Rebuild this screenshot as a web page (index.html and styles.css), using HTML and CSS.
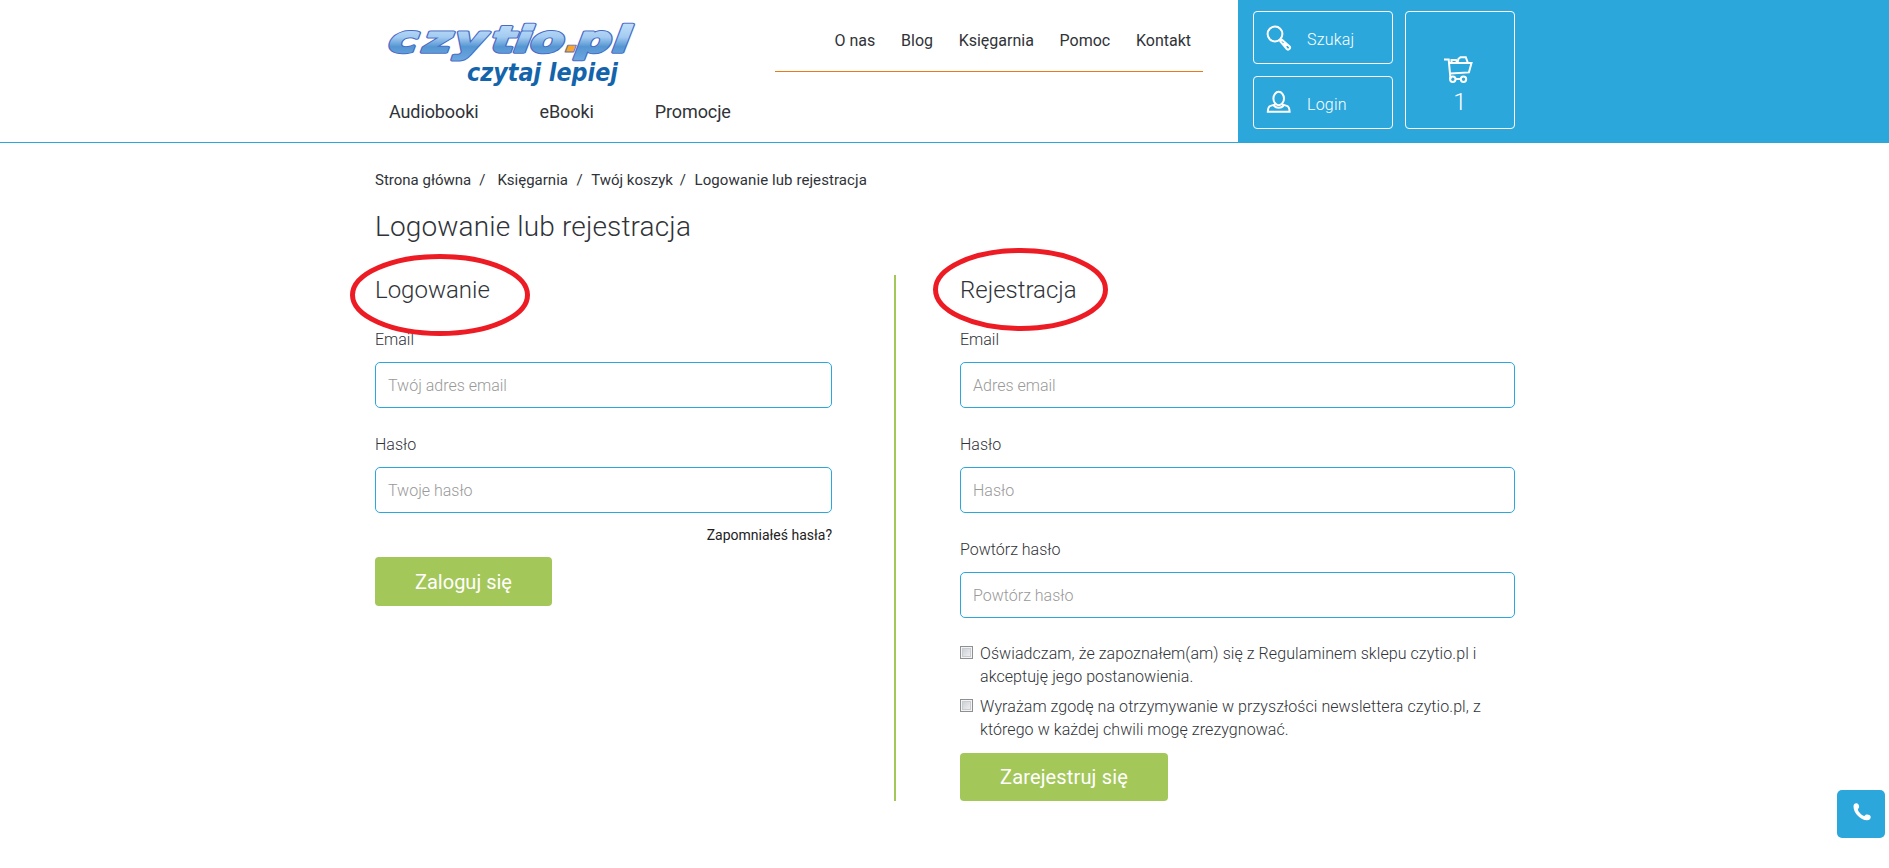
FILE: index.html
```html
<!DOCTYPE html>
<html lang="pl">
<head>
  <meta charset="UTF-8">
  <meta name="viewport" content="width=device-width, initial-scale=1.0">
  <title>Logowanie lub rejestracja - czytio.pl</title>
  <link rel="stylesheet" href="styles.css">
</head>
<body>
  <header class="header">
    <div class="header-main">
      <div class="brand">
        <a href="#" class="logo">
          <svg width="252" height="86" viewBox="0 0 252 86">
            <defs>
              <linearGradient id="logo-blue" gradientUnits="userSpaceOnUse" x1="0" y1="-30" x2="0" y2="8">
                <stop offset="0" stop-color="#c3e2fb"/>
                <stop offset="0.4" stop-color="#a3cbf1"/>
                <stop offset="0.65" stop-color="#5596d2"/>
                <stop offset="1" stop-color="#6ba6e0"/>
              </linearGradient>
            </defs>
            <g class="logo-name" transform="translate(-1 52) skewX(-7) scale(1.35 1)">
              <text class="logo-edge" x="0 25.500 48.500 76 93 105 139 166">czytiopl</text>
              <text class="logo-fill" x="0 25.500 48.500 76 93 105 139 166">czytiopl</text>
              <text class="logo-dot" x="129.500">.</text>
            </g>
            <text x="78" y="81" class="logo-tag" textLength="151" lengthAdjust="spacingAndGlyphs">czytaj lepiej</text>
          </svg>
        </a>
        <nav class="main-nav">
          <a href="#">Audiobooki</a>
          <a href="#">eBooki</a>
          <a href="#">Promocje</a>
        </nav>
      </div>
      <nav class="top-nav">
        <a href="#">O nas</a>
        <a href="#">Blog</a>
        <a href="#">Księgarnia</a>
        <a href="#">Pomoc</a>
        <a href="#">Kontakt</a>
      </nav>
    </div>
    <div class="header-tools">
      <div class="tools-left">
        <a href="#" class="tool">
          <svg width="26" height="26" viewBox="0 0 26 26">
            <circle cx="9" cy="9" r="7.4"/>
            <path d="M14 14.2l2 2M16 14.8l7.4 6.4a1.9 1.9 0 0 1-2.6 2.8l-6.4-7.4zM17.5 17.8l3.4 3.2"/>
          </svg>
          <span>Szukaj</span>
        </a>
        <a href="#" class="tool">
          <svg width="26" height="26" viewBox="0 0 26 26">
            <ellipse cx="12.7" cy="8.500" rx="5.3" ry="6.7"/>
            <path d="M9.5 14.400l-5 1.5c-2 .7-2.6 2.4-2.7 5.8h21.8c-.1-3.400-.7-5.100-2.700-5.800l-5-1.500M7.800 15.800c2.500 2.700 7.300 2.700 9.800 0"/>
          </svg>
          <span>Login</span>
        </a>
      </div>
      <a href="#" class="cart">
        <svg width="30" height="29" viewBox="0 0 30 29">
          <path d="M1 4.600h4.700l1.800 19.400M6.500 8h22l-2.600 9.400-18.600 1.200M8.500 7.500V5h4.500l1 2M14.500 7.500l1-3.700 2-1.600h5.300l1.900 5.300M13 24h4"/>
          <circle cx="9.800" cy="24.200" r="2.700"/>
          <circle cx="20.500" cy="24.200" r="2.700"/>
        </svg>
        <span>1</span>
      </a>
    </div>
  </header>

  <main class="container">
    <div class="breadcrumb">
      <a href="#">Strona główna</a><span class="sep-wide">/</span>
      <a href="#">Księgarnia</a><span>/</span>
      <a href="#" class="crumb-cart">Twój koszyk</a><span>/</span>
      <a href="#" class="crumb-current">Logowanie lub rejestracja</a>
    </div>

    <h1>Logowanie lub rejestracja</h1>

    <div class="columns">
      <form class="login">
        <h2>Logowanie
          <svg class="mark mark-login" width="180" height="82" viewBox="0 0 180 82"><ellipse cx="90" cy="41" rx="87.500" ry="38.500"/></svg>
        </h2>
        <label for="login-email">Email</label>
        <input type="email" id="login-email" placeholder="Twój adres email">
        <label for="login-haslo">Hasło</label>
        <input type="password" id="login-haslo" placeholder="Twoje hasło">
        <a href="#" class="forgot">Zapomniałeś hasła?</a>
        <button type="submit">Zaloguj się</button>
      </form>

      <form class="register">
        <h2>Rejestracja
          <svg class="mark mark-register" width="175" height="83" viewBox="0 0 175 83"><ellipse cx="87.500" cy="41.500" rx="85" ry="39"/></svg>
        </h2>
        <label for="reg-email">Email</label>
        <input type="email" id="reg-email" placeholder="Adres email">
        <label for="reg-haslo">Hasło</label>
        <input type="password" id="reg-haslo" placeholder="Hasło">
        <label for="reg-haslo2">Powtórz hasło</label>
        <input type="password" id="reg-haslo2" placeholder="Powtórz hasło">
        <div class="agreements">
          <div class="agreement">
            <input type="checkbox" id="regulamin">
            <label for="regulamin">Oświadczam, że zapoznałem(am) się z Regulaminem sklepu czytio.pl i<br>akceptuję jego postanowienia.</label>
          </div>
          <div class="agreement">
            <input type="checkbox" id="newsletter">
            <label for="newsletter">Wyrażam zgodę na otrzymywanie w przyszłości newslettera czytio.pl, z<br>którego w każdej chwili mogę zrezygnować.</label>
          </div>
        </div>
        <button type="submit">Zarejestruj się</button>
      </form>
    </div>
  </main>

  <a href="#" class="phone">
    <svg width="20" height="20" viewBox="0 0 20 20">
      <path d="M1.500 4.500C1.500 2 3 1 4.800 1.300c1.500.3 2.600 2.400 2.300 4-.2 1.200-1.300 1.500-1.200 2.300.3 2.300 3.700 5.800 6.100 6.300.9.200 1.200-1 2.400-1.300 1.700-.4 4 .6 4.300 2.100.3 1.800-1.200 3.500-3.700 3.500C8.500 18.200 1.500 11 1.500 4.500z"/>
    </svg>
  </a>
</body>
</html>
```
FILE: styles.css
```css
* {
  box-sizing: border-box;
  margin: 0;
  padding: 0;
}

body {
  font-family: Roboto, 'Liberation Sans', sans-serif;
  font-size: 16px;
  font-weight: 300;
  background: #fff;
  color: #303338;
  min-height: 100vh;
  overflow: hidden;
}

a {
  color: inherit;
  text-decoration: none;
  white-space: nowrap;
}

/* header */
.header {
  display: flex;
  height: 143px;
}

.header-main {
  display: flex;
  flex: 0 0 1238px;
  padding-left: 375px;
  border-bottom: 1px solid #2ba7dc;
}

.brand {
  width: 400px;
  padding-left: 14px;
}

.logo {
  display: block;
  height: 100px;
}

.logo svg {
  display: block;
  overflow: visible;
}

.logo-name {
  font: italic bold 36px 'DejaVu Sans', sans-serif;
  stroke-linejoin: round;
}

.logo-edge {
  fill: #4a6bc4;
  stroke: #4a6bc4;
  stroke-width: 3.6px;
}

.logo-fill {
  fill: url(#logo-blue);
  stroke: url(#logo-blue);
  stroke-width: 1.6px;
}

.logo-dot {
  fill: #f9a62b;
  stroke: #5b6fb0;
  stroke-width: 0.8px;
}

.logo-tag {
  font: italic bold 24px 'DejaVu Sans', sans-serif;
  fill: #1464ab;
}

.main-nav {
  display: flex;
  gap: 61px;
  font-size: 18px;
  font-weight: 400;
  letter-spacing: -0.1px;
  line-height: 24px;
}

.top-nav {
  display: flex;
  justify-content: flex-end;
  gap: 25.7px;
  width: 428px;
  height: 72px;
  padding: 31px 12px 0 0;
  border-bottom: 1px solid #ea7b12;
  font-weight: 400;
  line-height: 20px;
}

.header-tools {
  display: flex;
  flex: 1;
  gap: 12px;
  padding: 11px 0 0 15px;
  background: #2ba7dc;
  color: #fff;
}

.header-tools svg {
  fill: none;
  stroke: #fff;
  stroke-width: 2;
}

.tools-left {
  display: flex;
  flex-direction: column;
  gap: 12px;
}

.tool {
  display: flex;
  align-items: center;
  gap: 15px;
  width: 140px;
  height: 53px;
  padding-left: 12px;
  border: 1px solid #fff;
  border-radius: 4px;
}

.tool span {
  padding-top: 4px;
  letter-spacing: 0.2px;
}

.cart {
  display: flex;
  flex-direction: column;
  align-items: center;
  width: 110px;
  height: 118px;
  padding-top: 43px;
  border: 1px solid #fff;
  border-radius: 4px;
  font-size: 24px;
  line-height: 36px;
}

.cart svg {
  margin-right: 4px;
}

/* content */
.container {
  width: 1140px;
  margin-left: 375px;
  padding-top: 27px;
}

.breadcrumb {
  display: flex;
  font-size: 15px;
  font-weight: 400;
  line-height: 20px;
}

.breadcrumb span {
  margin: 0 8.5px;
}

.breadcrumb .sep-wide {
  margin: 0 12px 0 8px;
}

.breadcrumb .crumb-cart + span {
  margin-left: 7px;
}

.breadcrumb .crumb-current {
  letter-spacing: 0.08px;
}

h1 {
  margin-top: 17px;
  font-size: 28px;
  font-weight: 300;
  letter-spacing: 0.15px;
  line-height: 40px;
}

.columns {
  display: flex;
  margin-top: 28px;
}

h2 {
  position: relative;
  margin-bottom: 25px;
  font-size: 24px;
  font-weight: 300;
  line-height: 30px;
}

.mark {
  position: absolute;
  fill: none;
  stroke: #ed1c24;
  stroke-width: 5;
}

.mark-login {
  left: -25px;
  top: -21px;
}

.mark-register {
  left: -27px;
  top: -27px;
}

.login,
.register {
  display: flex;
  flex-direction: column;
  align-items: flex-start;
}

.login {
  width: 521px;
  padding-right: 62px;
  border-right: 2px solid #a4c75a;
}

.register {
  width: 619px;
  padding-left: 64px;
}

label {
  line-height: 20px;
}

input {
  width: 100%;
  height: 46px;
  margin: 12px 0 27px;
  padding: 0 12px;
  border: 1px solid #2ba7dc;
  border-radius: 5px;
  background: #fff;
  font: inherit;
}

input::placeholder {
  color: #999;
}

.forgot {
  align-self: flex-end;
  margin: -15px 0 12px;
  color: #222;
  font-size: 14px;
  font-weight: 400;
  line-height: 20px;
}

button {
  height: 49px;
  padding: 0 40px;
  border: none;
  border-radius: 4px;
  background: #a4c75a;
  color: #fff;
  font: inherit;
  font-size: 20px;
  font-weight: 400;
  white-space: nowrap;
}

.agreements {
  display: flex;
  flex-direction: column;
  gap: 7px;
  margin: -3px 0 12px;
}

.agreement {
  display: flex;
  gap: 7px;
}

.agreement input {
  appearance: none;
  flex: none;
  width: 13px;
  height: 13px;
  margin: 4px 0 0;
  padding: 0;
  border: 1px solid #8e8f8f;
  border-radius: 0;
  background: linear-gradient(135deg, #c4c9d0, #f6f6f6);
  box-shadow: inset 0 0 0 1px #f4f4f4, inset 0 0 0 2px #c8ccd2;
}

.agreement label {
  letter-spacing: 0.07px;
  line-height: 23px;
  white-space: nowrap;
}

.register button {
  height: 48px;
  letter-spacing: 0.15px;
}

.phone {
  position: fixed;
  right: 4px;
  bottom: 30px;
  width: 48px;
  height: 48px;
  padding: 12px 0 0 15px;
  border-radius: 5px;
  background: #2ba7dc;
}

.phone svg {
  fill: #fff;
}
```
